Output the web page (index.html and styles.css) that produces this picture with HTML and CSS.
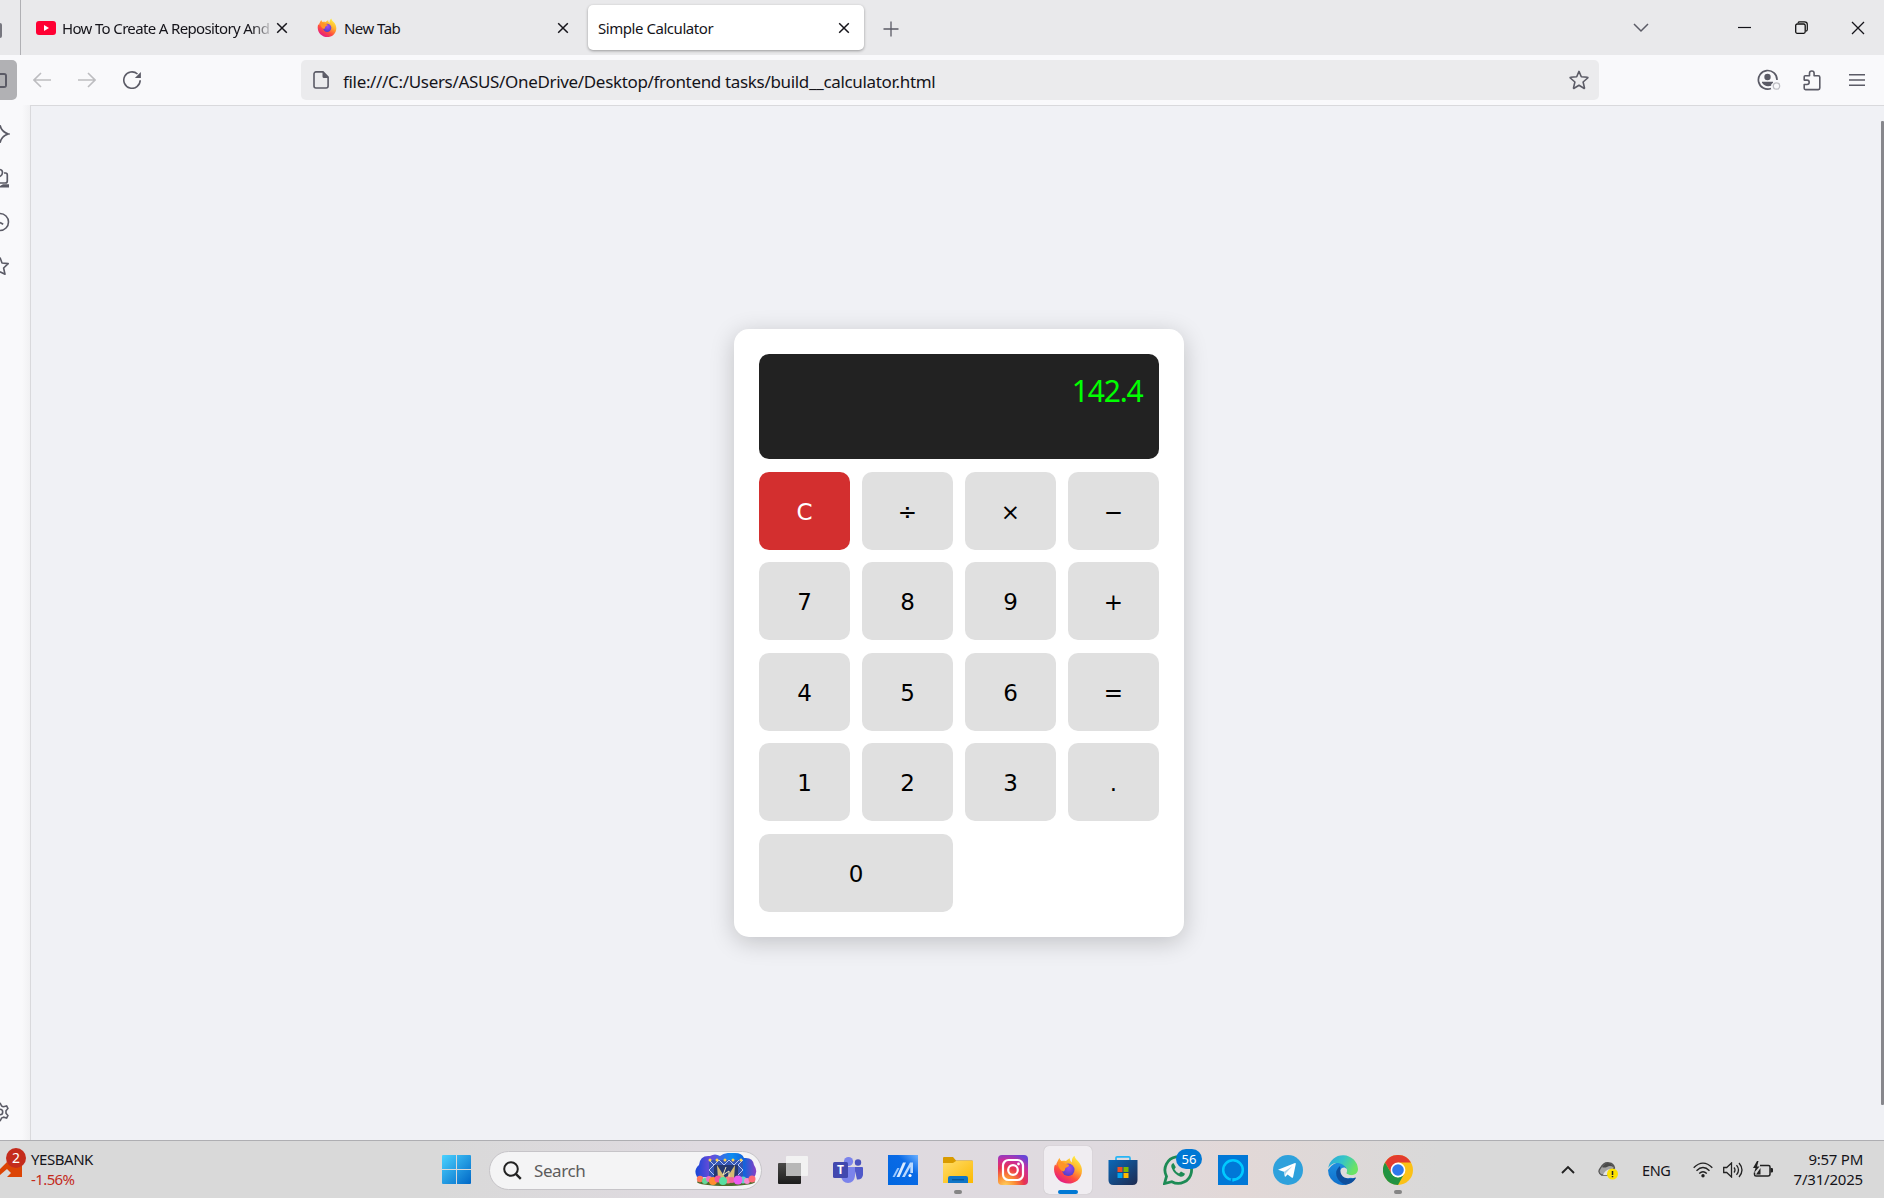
FILE: index.html
```html
<!DOCTYPE html>
<html lang="en">
<head>
<meta charset="utf-8">
<title>Simple Calculator</title>
<link rel="stylesheet" href="styles.css">
</head>
<body>
<svg class="defs" width="0" height="0">
  <defs>
    <linearGradient id="ffBody" x1=".85" y1=".05" x2=".25" y2="1"><stop offset="0" stop-color="#fff044"/><stop offset=".35" stop-color="#ffb02e"/><stop offset=".65" stop-color="#ff4f3e"/><stop offset="1" stop-color="#e0128f"/></linearGradient>
    <radialGradient id="ffCore" cx=".55" cy=".35" r=".7"><stop offset="0" stop-color="#a14bf0"/><stop offset="1" stop-color="#4a3fc4"/></radialGradient>
    <linearGradient id="win" x1="0" y1="0" x2="1" y2="1"><stop offset="0" stop-color="#4ad2ff"/><stop offset="1" stop-color="#0067c6"/></linearGradient>
    <linearGradient id="folder" x1="0" y1="0" x2="1" y2="1"><stop offset="0" stop-color="#ffdc6a"/><stop offset="1" stop-color="#fcb900"/></linearGradient>
    <radialGradient id="insta" cx=".25" cy="1.05" r="1.15"><stop offset="0" stop-color="#ffd75e"/><stop offset=".3" stop-color="#fb8a35"/><stop offset=".55" stop-color="#e8344f"/><stop offset=".78" stop-color="#c92e9d"/><stop offset="1" stop-color="#6a45d6"/></radialGradient>
    <linearGradient id="store" x1="0" y1="0" x2="1" y2="1"><stop offset="0" stop-color="#0a68b8"/><stop offset="1" stop-color="#1f2b50"/></linearGradient>
    <linearGradient id="edgeTop" x1="0" y1="0" x2="1" y2=".4"><stop offset="0" stop-color="#2aa5df"/><stop offset=".5" stop-color="#35c4c8"/><stop offset="1" stop-color="#6be364"/></linearGradient>
    <linearGradient id="edgeMid" x1="0" y1="0" x2="0" y2="1"><stop offset="0" stop-color="#1f8fe0"/><stop offset="1" stop-color="#0f6fcb"/></linearGradient>
    <linearGradient id="asus" x1="1" y1="0" x2="0" y2="1"><stop offset="0" stop-color="#6bb0ff"/><stop offset=".35" stop-color="#0a6ae6"/><stop offset="1" stop-color="#0067e0"/></linearGradient>
    <linearGradient id="dark" x1="0" y1="0" x2="0" y2="1"><stop offset="0" stop-color="#4a4a48"/><stop offset="1" stop-color="#1c1c1c"/></linearGradient>
    <linearGradient id="sky" x1="0" y1="0" x2="1" y2="0"><stop offset="0" stop-color="#1747d8"/><stop offset=".25" stop-color="#6b4bd8"/><stop offset=".6" stop-color="#0a8cf0"/><stop offset=".8" stop-color="#1263dc"/><stop offset="1" stop-color="#8a3fc4"/></linearGradient>
    <symbol id="firefox" viewBox="0 0 30 30">
      <path fill="url(#ffBody)" d="M4.5 6.5C5 5 6 3.500 6.500 3c.3 1.300 1 2.300 2 3 1.500-.5 3-.5 4.500 0C14 5 15.500 3.500 17 3.200c-.5 2 .8 3.300 2 4.300C18.500 5 19.500 2 21.500.8c.3 3 3 4.500 5 7.200C30.500 14 29.500 21 24.500 25.500c-5.500 4.500-14 4-19-.7C1 20.500 0 14 2 9.500c.6.4 1 .8 1.200 1.300C3 9.500 3.500 8 4.500 6.500z"/>
      <circle cx="15.300" cy="14.800" r="6.200" fill="url(#ffCore)"/>
      <path fill="#ff9527" d="M4.800 7.500c2-.8 5-.8 7.200 1.500 1.500 0 3.500.2 4 1.200.2 1.500-2.500 2-3.500 2.800-.8 1 .2 2.200-2 3.500-3-1-5.500-4-5.700-9z"/>
    </symbol>
    <symbol id="close" viewBox="0 0 12 12"><path d="M1.200 1.200l9.600 9.600M10.800 1.200l-9.600 9.600" fill="none" stroke="#15141a" stroke-width="1.500"/></symbol>
    <symbol id="star" viewBox="0 0 20 20"><path d="M10 1.400l2.300 5.400 6.200.5c.4 0 .5.400.2.700l-4.600 4 1.400 5.900c.1.400-.3.600-.6.400L10 15.200l-4.900 3.100c-.3.200-.7 0-.6-.4l1.400-5.900-4.600-4c-.3-.3-.2-.7.2-.7l6.200-.5z" fill="none" stroke="#5b5b66" stroke-width="1.600" stroke-linejoin="round"/></symbol>
  </defs>
</svg>

<div class="screen">
  <header class="tabbar">
    <div class="pinned"><i class="pinned-edge"></i></div>
    <div class="tabs">
      <div class="tab">
        <svg class="favicon" viewBox="0 0 20 20"><rect y="3" width="20" height="14" rx="3" fill="#ff0033"/><path d="M8 7v6l5-3z" fill="#fff"/></svg>
        <span class="tab-title fade t1">How To Create A Repository And</span>
        <svg class="x"><use href="#close"/></svg>
      </div>
      <div class="tab">
        <svg class="favicon"><use href="#firefox"/></svg>
        <span class="tab-title t2">New Tab</span>
        <svg class="x"><use href="#close"/></svg>
      </div>
      <div class="tab active">
        <span class="tab-title t3">Simple Calculator</span>
        <svg class="x"><use href="#close"/></svg>
      </div>
    </div>
    <svg class="plus" viewBox="0 0 16 16"><path d="M8 .5v15M.5 8h15" stroke="#5b5b66" stroke-width="1.300"/></svg>
    <div class="window-controls">
      <svg width="16" height="10" viewBox="0 0 16 10"><path d="M1 1l7 7 7-7" fill="none" stroke="#5b5b66" stroke-width="1.500"/></svg>
      <svg class="min" width="13" height="13" viewBox="0 0 13 13"><path d="M0 6.500h13" stroke="#15141a" stroke-width="1.200"/></svg>
      <svg class="max" width="13" height="13" viewBox="0 0 13 13"><rect x=".7" y="3" width="9.500" height="9.300" rx="1.500" fill="none" stroke="#111" stroke-width="1.300"/><path d="M3 1.800Q3.300.8 4.500.8H9.500Q12.300.8 12.300 3.500V8.500Q12.300 9.900 11 10.200" fill="none" stroke="#111" stroke-width="1.200"/></svg>
      <svg class="shut" width="14" height="14" viewBox="0 0 14 14"><path d="M1 1l12 12M13 1L1 13" stroke="#15141a" stroke-width="1.300"/></svg>
    </div>
  </header>

  <nav class="navbar">
    <div class="side-toggle"><i></i></div>
    <svg class="nav-icon back" viewBox="0 0 18 18"><path d="M18 9H1M8 2L1 9l7 7" fill="none" stroke="#bdbdc0" stroke-width="1.600"/></svg>
    <svg class="nav-icon fwd" viewBox="0 0 18 18"><path d="M0 9h17M10 2l7 7-7 7" fill="none" stroke="#bdbdc0" stroke-width="1.600"/></svg>
    <svg class="nav-icon reload" viewBox="0 0 18 18"><path d="M17.200 9.200A8.200 8.200 0 1 1 14.500 3" fill="none" stroke="#5b5b66" stroke-width="1.600"/><path d="M17.900 1v6h-6z" fill="#5b5b66"/></svg>
    <div class="urlbar">
      <svg class="doc" viewBox="0 0 16 18"><path d="M3 .9h7l5.100 5.200V15a2 2 0 0 1-2 2H3a2 2 0 0 1-2-2V2.900a2 2 0 0 1 2-2z" fill="none" stroke="#5b5b66" stroke-width="1.600"/><path d="M9.500 1l6 6h-4.500a1.500 1.500 0 0 1-1.500-1.500z" fill="#5b5b66"/></svg>
      <span class="url">file:///C:/Users/ASUS/OneDrive/Desktop/frontend tasks/build__calculator.html</span>
      <svg class="bookmark"><use href="#star"/></svg>
    </div>
    <svg class="account" viewBox="0 0 24 22"><path d="M20 11A9.300 9.300 0 1 0 14 19.500" fill="none" stroke="#5b5b66" stroke-width="1.700"/><circle cx="10.500" cy="8" r="3.200" fill="#5b5b66"/><path d="M5 12.800h11v1l-1.800 1.700v1.300Q8 18.500 5 13.800z" fill="#5b5b66"/><circle cx="19.500" cy="17" r="3.200" fill="none" stroke="#bebec3" stroke-width="1.300"/></svg>
    <svg class="puzzle" viewBox="0 0 18 21"><path d="M1.200 6.800Q1.200 5.800 2.200 5.800H6.500V3.300a2.300 2.300 0 0 1 4.600 0V5.800H15.300Q16.800 5.800 16.800 7.300V18Q16.800 19.600 15.300 19.600H2.500Q1.200 19.600 1.200 18.300V14.500H4a2.200 2.200 0 0 0 0-4.400H1.200z" fill="none" stroke="#5b5b66" stroke-width="1.600" stroke-linejoin="round"/></svg>
    <svg class="menu" viewBox="0 0 16 14"><path d="M0 1.700h16M0 7h16M0 12.300h16" stroke="#5b5b66" stroke-width="1.500"/></svg>
  </nav>

  <div class="middle">
    <aside class="sidebar">
      <svg viewBox="0 0 10 20"><path d="M0 1.300Q1.500 8 8.300 10Q1.500 12 0 18.700" fill="none" stroke="#5b5b66" stroke-width="1.700"/></svg>
      <svg viewBox="0 0 10 20"><path d="M0 1.500Q2.500 2 2.500 4.500T0 8.500M4 5h1.500Q7.300 5 7.300 7v6q0 2-2 2H0" fill="none" stroke="#5b5b66" stroke-width="1.700"/><path d="M0 19.500h9v-3.200H3L0 18z" fill="#5b5b66"/></svg>
      <svg viewBox="0 0 10 20"><path d="M0 1.500a8.500 8.500 0 0 1 0 17M0 10.500l3.200 1.800" fill="none" stroke="#5b5b66" stroke-width="1.600"/></svg>
      <svg viewBox="0 0 10 20"><path d="M0 1.500L2 7l6.200.6L3.600 12 5 18.200 0 15.800" fill="none" stroke="#5b5b66" stroke-width="1.600" stroke-linejoin="round"/></svg>
      <svg class="gear" viewBox="0 0 10 20"><path d="M0 .8l1.500 3q1 .8 2 1L6.600 4l1.300 2.500L6 8.700v2.600l1.900 2.200L6.600 16l-3.100-.8q-1.200.3-2 1L0 19.200M0 7.300a2.700 2.700 0 0 1 0 5.400" fill="none" stroke="#5b5b66" stroke-width="1.600"/></svg>
    </aside>
    <main class="page">
      <section class="calculator">
        <div class="display"><span>142.4</span></div>
        <div class="keys">
          <button class="clear">C</button><button>÷</button><button>×</button><button>−</button>
          <button>7</button><button>8</button><button>9</button><button>+</button>
          <button>4</button><button>5</button><button>6</button><button>=</button>
          <button>1</button><button>2</button><button>3</button><button>.</button>
          <button class="zero">0</button>
        </div>
      </section>
      <i class="scroll"></i>
    </main>
  </div>

  <footer class="taskbar">
    <div class="widget">
      <svg class="stock" viewBox="0 0 22 30"><path d="M0 21l7-7 5 4 3-4 7 1v14H7l4-4-4-4-7 6z" fill="#dc4405"/></svg>
      <b class="count">2</b>
      <div class="ticker"><span class="name">YESBANK</span><span class="change">-1.56%</span></div>
    </div>
    <svg class="start" viewBox="0 0 29 29"><path fill="url(#win)" d="M1 0h13v14H0V1q0-1 1-1zM15 0h13q1 0 1 1v13H15zM0 15h14v14H1q-1 0-1-1zM15 15h14v13q0 1-1 1H15z"/></svg>
    <div class="search">
      <svg class="lens" viewBox="0 0 19 19"><circle cx="8" cy="8" r="6.800" fill="none" stroke="#222" stroke-width="2"/><path d="M12.800 12.800l5 5" stroke="#222" stroke-width="2.400"/></svg>
      <span>Search</span>
      <svg class="art" viewBox="0 0 62 34">
        <ellipse cx="31" cy="29" rx="29" ry="4" fill="#4f6c2c"/>
        <g fill="url(#sky)"><path d="M2 24Q-2 17 4 12Q5 2 15 3Q20 0 25 3Q30-1 40 0Q47 0 49 5Q58 4 59 12Q64 19 58 26z"/></g>
        <path d="M14 7h34v18h-5V12H19v13h-5z" fill="#3555b4"/><path d="M14 7l5 5-5 5 5 5M48 7l-5 5 5 5-5 5M19 12l5-5 5 5 5-5 5 5 5-5" fill="none" stroke="#b9c8f5"/>
        <path d="M19 12h24v13H19z" fill="#26386f"/><path d="M22 12l9 14h-8zM40 12L31 26h8z" fill="#d6bb72"/><path d="M31 14l-3 8 6-4v7" fill="none" stroke="#f5e9bb" stroke-width="1"/>
        <g fill="#ffd34d"><circle cx="15" cy="7" r="1.500"/><circle cx="22" cy="7" r="1.500"/><circle cx="30" cy="7" r="1.500"/><circle cx="38" cy="7" r="1.500"/><circle cx="46" cy="7" r="1.500"/></g>
        <circle cx="5" cy="26" r="3.200" fill="#ff7a5c"/><circle cx="10" cy="28" r="3" fill="#63d99a"/><circle cx="14" cy="26" r="3" fill="#f06fc0"/><circle cx="18" cy="28" r="4" fill="#ff8f2e"/><circle cx="23" cy="26" r="3.500" fill="#f5549e"/><circle cx="33" cy="27" r="3.500" fill="#ff7b80"/><circle cx="28" cy="28" r="4" fill="#58dfa0"/><circle cx="37" cy="27" r="3" fill="#f0659c"/><circle cx="48" cy="27" r="3.500" fill="#66d5c9"/><circle cx="43" cy="27" r="4.500" fill="#ea5cf0"/><circle cx="52" cy="28" r="3" fill="#f78bd0"/><circle cx="57" cy="26" r="3.500" fill="#ff6a76"/>
      </svg>
    </div>
    <div class="apps">
      <div class="app"><svg viewBox="0 0 30 30"><rect y="8" width="23" height="21" rx="1" fill="url(#dark)"/><rect x="8" y="1" width="22" height="20" rx="1" fill="#f2f2f2"/><path d="M8 8h15v13H8z" fill="#b7b7b7"/></svg></div>
      <div class="app"><svg viewBox="0 0 30 30"><circle cx="25" cy="7.500" r="3.200" fill="#4a52bd"/><path d="M21 12h8q1 0 1 1v7q-1 5-6 4.500z" fill="#5059c9"/><circle cx="15.500" cy="6.500" r="4.600" fill="#7b83eb"/><path d="M9 12h13v9q-1 7-7 7t-7-7z" fill="#7b83eb"/><rect y="7" width="15" height="16" rx="1.500" fill="#4248af"/><text x="7.500" y="19.300" text-anchor="middle" fill="#fff" font-size="12" font-weight="700" font-family="Open Sans, sans-serif">T</text></svg></div>
      <div class="app"><svg viewBox="0 0 30 30"><path fill="url(#asus)" d="M0 0h30v30H0z"/><path d="M4.500 22l4.800-9h2.200l-4.800 9z" fill="#9cc9ff"/><path d="M8.500 22L15 7.500h3L11.500 22z" fill="#d9eaff"/><path d="M14 22L22 7.500h3V18h-2.700v-6L16.800 22z" fill="#b9d9ff"/><circle cx="22" cy="20.500" r="1.600" fill="#fff"/></svg></div>
      <div class="app"><svg viewBox="0 0 30 30"><path d="M0 3q0-1 1-1h9l3 3.500h16q1 0 1 1V12H0z" fill="#d99b00"/><path d="M0 8h10l3-2h17v22H0z" fill="url(#folder)"/><path d="M5 28v-5q0-2 2-2h16q2 0 2 2v5z" fill="#0f75c8"/><path d="M9 24.800h12" stroke="#054a86"/></svg><i class="run"></i></div>
      <div class="app"><svg viewBox="0 0 30 30"><rect width="30" height="30" rx="4" fill="url(#insta)"/><g fill="none" stroke="#fff" stroke-width="2.200"><rect x="5" y="5" width="20" height="20" rx="5.500"/><circle cx="15" cy="15" r="4.800"/></g><circle cx="20.500" cy="9" r="1.400" fill="#fff"/></svg></div>
      <div class="app current"><svg><use href="#firefox"/></svg><i class="run"></i></div>
      <div class="app"><svg viewBox="0 0 30 30"><path d="M8 6V3q0-1.200 1.200-1.200h11.600Q22 1.800 22 3v3" fill="none" stroke="#27b5f5" stroke-width="1.700"/><path d="M.5 5h29v20q0 5-5 5h-19q-5 0-5-5z" fill="url(#store)"/><path d="M9.500 12h5v5h-5z" fill="#f25022"/><path d="M15.500 12h5v5h-5z" fill="#7fba00"/><path d="M9.500 18h5v5h-5z" fill="#00a4ef"/><path d="M15.500 18h5v5h-5z" fill="#ffb900"/></svg></div>
      <div class="app"><svg viewBox="0 0 30 30"><path d="M1.500 28.500l2-7.200A13.300 13.300 0 1 1 8.800 26.700z" fill="none" stroke="#1d8b55" stroke-width="2.800"/><path d="M10.500 8q-3 1.200-2 4.500 2.500 7 9 9.200 3.500.3 4.500-3l-4-2.200-2 2q-3-1.400-4.600-4.300l1.400-2z" fill="#1d8b55"/></svg><b class="badge">56</b></div>
      <div class="app"><svg viewBox="0 0 30 30"><path fill="#0078d7" d="M0 0h30v30H0z"/><circle cx="15" cy="15" r="9.800" fill="none" stroke="#00caff" stroke-width="2.500"/><path d="M14.300 27v-3.500q4 0 7-2.500-2 4.500-7 6z" fill="#00caff"/><path d="M12.800 23.300h1.500V27h-1.500z" fill="#0078d7"/></svg></div>
      <div class="app"><svg viewBox="0 0 30 30"><circle cx="15" cy="15" r="15" fill="#2ea1dc"/><path d="M5 14.700L22 8q1-.2.800 1l-2.700 13q-.3 1.300-1.500.6l-4-3-2 1.800q-.8.700-.9-.4l-.7-4.200z" fill="#fff"/><path d="M11 16.800l8.500-5.800-6.500 7-1.300 3z" fill="#a8d3ea"/></svg></div>
      <div class="app"><svg viewBox="0 0 30 30"><path d="M0 15A15 15 0 0 1 15 7l6 6-7 2 4 6 9 3A15 15 0 0 1 0 15z" fill="url(#edgeMid)"/><path d="M.2 13A15 15 0 0 1 30 14c0 6-7 7.500-11 5-1.500-1 .8-2-.2-4.500C17.500 10.500 13 8 9 8 5 8 2 10 .2 13z" fill="url(#edgeTop)"/><path d="M12 11Q7 15 8.500 21q2 6 9 8.700 7-.7 10.500-6.700-.3-1-1.300-.3-4 2-8.700.3Q12.500 20 12.500 15z" fill="#0e4f9d"/><path d="M18.600 19q-1.200-1.200 0-2.500 1-3-2-4-3.600-.2-4.200 3 0 4.500 4 7 5.500 2 10.600-2Q22.500 21 18.600 19z" fill="#dfdcdc"/></svg></div>
      <div class="app"><svg viewBox="0 0 30 30"><circle cx="15" cy="15" r="15" fill="#fbc116"/><path d="M2 7.500A15 15 0 0 1 28 7.500H15l-6.500 11z" fill="#e33b2e"/><path d="M2 7.500L8.500 18.750Q11 22 15 22.500l5.500-2.500L15 30A15 15 0 0 1 2 7.500z" fill="#229342"/><circle cx="15" cy="15" r="7.400" fill="#fff"/><circle cx="15" cy="15" r="5.800" fill="#2f77ea"/></svg><i class="run"></i></div>
    </div>
    <div class="tray">
      <svg class="up" viewBox="0 0 14 9"><path d="M1 8l6-6 6 6" fill="none" stroke="#222" stroke-width="1.900"/></svg>
      <svg class="cloud" viewBox="0 0 20 18"><path d="M3.500 13Q-1 10 2.500 6 6-.5 11.500 1q4 .5 5 5l-7 7z" fill="#a3a3a3" stroke="#555" stroke-width="1.300"/><path d="M4 5Q8-.5 12 1.500q3 1 4 4Q12 3 9 5 6 6 4 5z" fill="#4a4a4a"/><path d="M5 13q2-5 7-6l-3 6z" fill="#e4e4e4"/><circle cx="14.500" cy="12" r="5.500" fill="#fce100"/><path d="M14.500 9v4M14.500 14v1.300" stroke="#222" stroke-width="1.500"/></svg>
      <span class="lang">ENG</span>
      <svg class="wifi" viewBox="0 0 20 16"><g fill="none" stroke="#222" stroke-width="1.400"><path d="M.7 5.800Q10-3.500 19.300 5.800M3.500 8.700q6.500-6.300 13 0M6.200 11.400q3.800-3.500 7.600 0"/></g><circle cx="10" cy="13.700" r="1.700" fill="#222"/></svg>
      <svg class="sound" viewBox="0 0 20 16"><g fill="none" stroke="#222" stroke-width="1.300"><path d="M.7 5.500h3L8.500 1v14l-4.800-4.500h-3z"/><path d="M11 5.500q2 2.500 0 5M13.500 3.200q4 4.800 0 9.600M16 1q6 7 0 14"/></g></svg>
      <svg class="battery" viewBox="0 0 20 16"><path d="M7 3.500h8.500q1.500 0 1.500 1.500v7q0 2-2 2H3q-1.500 0-1.500-1.500v-2" fill="none" stroke="#222" stroke-width="1.500"/><path d="M17.500 6h1.300q1.200 0 1.200 1v2.500q0 1-1.200 1h-1.300zM4-1L0 6h2.500L1 11 6.500 4.500H4L5.500-1zM3 12.500L7.500 6v6.500z" fill="#222"/></svg>
      <div class="clock"><span class="time">9:57 PM</span><span class="date">7/31/2025</span></div>
    </div>
  </footer>
</div>
</body>
</html>
```
FILE: styles.css
```css
* { box-sizing: border-box; }
body {
  margin: 0;
  overflow: hidden;
  font-family: "Noto Sans", "Open Sans", sans-serif;
  color: #15141a;
}
svg { display: block; flex: none; }
.defs { position: absolute; }
.screen {
  width: 1884px;
  height: 1198px;
  display: grid;
  grid-template-rows: 55px 50px 1035px 58px;
  overflow: hidden;
}

/* Tab strip */
.tabbar { display: flex; background: #e9e9eb; }
.pinned { width: 21px; border-right: 1px solid #b0b0b4; padding-top: 23px; }
.pinned-edge { display: block; width: 2px; height: 15px; background: #77777f; border-radius: 0 2px 2px 0; }
.tabs { display: flex; gap: 5px; padding: 5px 0 5px 5px; }
.tab {
  width: 276px;
  height: 45px;
  display: flex;
  align-items: center;
  padding: 0 14px 0 10px;
  border-radius: 5px;
}
.tab.active { background: #fff; box-shadow: 0 1px 3px rgba(0, 0, 0, .35); }
.favicon { width: 20px; height: 20px; margin-right: 7px; }
.tab-title { flex: 1; font-size: 15px; line-height: 24px; white-space: nowrap; overflow: hidden; padding-top: 1px; }
.fade { margin-left: -1px; -webkit-mask-image: linear-gradient(90deg, #000 190px, transparent 212px); mask-image: linear-gradient(90deg, #000 190px, transparent 212px); }
.t1 { letter-spacing: -.65px; }
.t2 { letter-spacing: -.55px; }
.t3 { letter-spacing: -.45px; }
.x { width: 12px; height: 12px; }
.tab .x { margin: 0 0 0 2px; }
.plus { width: 16px; height: 16px; margin: 21px 0 0 19px; }
.window-controls { margin: 0 19px 0 auto; display: flex; align-items: center; }
.min { margin-left: 89px; }
.max { margin-left: 44px; }
.shut { margin-left: 43px; }

/* Navigation toolbar */
.navbar { display: flex; align-items: center; background: #f9f9fb; }
.side-toggle { width: 17px; height: 40px; background: #b1b1b4; border-radius: 0 5px 5px 0; padding-top: 13px; }
.side-toggle i { display: block; width: 7px; height: 15px; border: 2px solid #5b5b66; border-left: 0; border-radius: 0 3px 3px 0; }
.nav-icon { width: 18px; height: 18px; }
.back { margin-left: 16px; }
.fwd { margin-left: 27px; }
.reload { margin-left: 27px; }
.urlbar {
  width: 1298px;
  height: 40px;
  margin-left: 160px;
  padding: 0 10px 0 12px;
  border-radius: 5px;
  background: #ebebed;
  display: flex;
  align-items: center;
}
.doc { width: 16px; height: 18px; margin-right: 14px; }
.url { flex: 1; font-size: 17px; line-height: 24px; letter-spacing: -.33px; padding-top: 3px; white-space: nowrap; }
.bookmark { width: 20px; height: 20px; }
.account { width: 24px; height: 22px; margin-left: 158px; }
.puzzle { width: 18px; height: 21px; margin-left: 22px; }
.menu { width: 16px; height: 14px; margin-left: 28px; }

/* Sidebar and page */
.middle { display: flex; }
.sidebar {
  width: 30px;
  padding: 19px 0 18px;
  display: flex;
  flex-direction: column;
  gap: 24px;
  background: linear-gradient(90deg, #f9f9fb 22px, #f1f1f3);
}
.sidebar svg { width: 10px; height: 20px; }
.sidebar .gear { margin-top: auto; }
.page {
  flex: 1;
  position: relative;
  background: #f0f2f5;
  background: #f0f1f5;
  border: solid #d9d9dc;
  border-width: 1px 0 0 1px;
  display: flex;
  align-items: flex-start;
  padding: 223px 0 0 703px;
}
.scroll { position: absolute; right: 0; top: 15px; width: 3px; height: 984px; background: #87878c; border-radius: 1px; }
.calculator {
  width: 450px;
  height: 608px;
  padding: 25px;
  background: #fff;
  border-radius: 15px;
  box-shadow: 0 5px 25px rgba(0, 0, 0, .2);
}
.display {
  height: 105px;
  margin-bottom: 12.5px;
  padding: 17px 16.500px;
  background: #222;
  color: #0f0;
  border-radius: 10px;
  text-align: right;
  font-size: 30px;
  line-height: 40px;
  letter-spacing: -1.200px;
}
.keys { display: grid; grid-template-columns: repeat(4, 91px); grid-auto-rows: 78px; gap: 12.5px 12px; }
.keys button {
  border: 0;
  border-radius: 10px;
  padding: 2px 0 0;
  background: #e0e0e0;
  color: #000;
  font: 23px "DejaVu Sans", sans-serif;
}
.keys .clear { background: #d32f2f; color: #fff; }
.keys .zero { grid-column: span 2; }

/* Taskbar */
.taskbar {
  display: flex;
  align-items: center;
  border-top: 1px solid #aeaeb2;
  background: linear-gradient(90deg, #d9d9d9 440px, #dfdae0 700px, #dfdadf 1100px, #e2d8d7 1240px, #d9d9d9 1440px);
}
.widget { width: 442px; height: 57px; position: relative; display: flex; }
.stock { width: 22px; height: 30px; margin-top: 7px; }
.count {
  position: absolute;
  left: 6px;
  top: 7px;
  width: 20px;
  height: 20px;
  border-radius: 50%;
  background: #c42b1c;
  color: #fff;
  font: 14px/20px "Noto Sans", sans-serif;
  text-align: center;
}
.ticker { display: flex; flex-direction: column; margin: 8px 0 0 9px; font-size: 15px; line-height: 20px; }
.name { letter-spacing: -.45px; }
.change { color: #c42b1c; letter-spacing: -.6px; }
.start { width: 29px; height: 29px; }
.search {
  width: 273px;
  height: 39px;
  margin: 1px 0 0 18px;
  padding: 0 4px 0 13px;
  display: flex;
  align-items: center;
  border: 1px solid #c6c4c8;
  border-radius: 20px;
  background: #f4f4f5;
}
.lens { width: 19px; height: 19px; }
.search span { font-size: 17px; margin-left: 12px; letter-spacing: -.4px; color: #5c5c5c; flex: 1; }
.art { width: 62px; height: 34px; }
.apps { display: flex; margin-left: 3px; }
.app { position: relative; width: 55px; height: 57px; display: flex; align-items: center; justify-content: center; padding-top: 1px; }
.app svg { width: 30px; height: 30px; }
.current::before { content: ""; position: absolute; left: 4px; top: 5px; width: 48px; height: 48px; border-radius: 5px; background: #f0edf1; box-shadow: 0 0 1px #aaa; }
.current svg { position: relative; }
.run { position: absolute; left: 24px; bottom: 4px; width: 8px; height: 4px; border-radius: 2px; background: #858585; }
.current .run { left: 18px; width: 20px; background: #0078d4; }
.badge {
  position: absolute;
  left: 26px;
  top: 8px;
  width: 26px;
  height: 20px;
  border-radius: 10px;
  background: #0078d4;
  color: #fff;
  font: 13px/20px "Noto Sans", sans-serif;
  text-align: center;
}
.tray { display: flex; align-items: center; margin-left: auto; padding-right: 21px; }
.up { width: 14px; height: 9px; margin-right: 23px; }
.cloud { width: 20px; height: 18px; margin: 3px 24px 0 0; }
.lang { width: 28px; margin: 1px 23px 0 0; font-size: 14.5px; letter-spacing: -.4px; }
.wifi { width: 20px; height: 16px; margin-right: 10px; }
.sound { width: 20px; height: 16px; margin-right: 10px; }
.battery { width: 20px; height: 16px; overflow: visible; }
.clock { width: 90px; display: flex; flex-direction: column; align-items: flex-end; margin-top: -2px; font-size: 15px; line-height: 20px; white-space: nowrap; }
.time { letter-spacing: -.25px; }
.date { letter-spacing: -.2px; }
```
